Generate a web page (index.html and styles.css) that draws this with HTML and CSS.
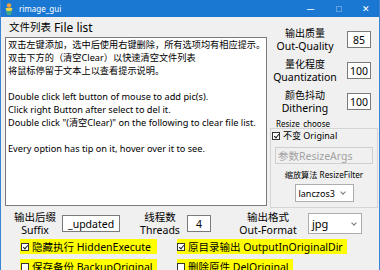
FILE: index.html
```html
<!DOCTYPE html>
<html lang="zh">

<head>
    <meta charset="UTF-8">
    <title>rimage_gui</title>
    <link rel="stylesheet" href="styles.css">
</head>

<body>
    <div class="window">
        <!-- 标题栏 -->
        <div class="titlebar">
            <svg class="app_icon" width="10" height="12" viewBox="0 0 10 12">
                <circle cx="5" cy="2.5" r="2.2" fill="#f2a23a" />
                <path d="M1.5 5 L8.5 5 L7.5 8 L2.5 8 Z" fill="#e8d24a" />
                <path d="M2 8 L8 8 L7 12 L3 12 Z" fill="#3aa58c" />
            </svg>
            <span class="title">rimage_gui</span>
            <div class="controls">
                <span class="ctl min">&#8212;</span>
                <span class="ctl max"></span>
                <span class="ctl close">&#10005;</span>
            </div>
        </div><!-- .titlebar end -->

        <div class="client">
            <div class="top">
                <div class="files">
                    <div class="files_label"><span class="zh">文件列表</span> File list</div>
                    <div class="filebox">
                        <p>双击左键添加，选中后使用右键删除，所有选项均有相应提示。</p>
                        <p>双击下方的（清空Clear）以快速清空文件列表</p>
                        <p>将鼠标停留于文本上以查看提示说明。</p>
                        <p>&nbsp;</p>
                        <p>Double click left button of mouse to add pic(s).</p>
                        <p>Click right Button after select to del it.</p>
                        <p>Double click "(清空Clear)" on the following to clear file list.</p>
                        <p>&nbsp;</p>
                        <p>Every option has tip on it, hover over it to see.</p>
                    </div>
                </div><!-- .files end -->

                <div class="options">
                    <div class="opt">
                        <div class="opt_label"><div class="zh">输出质量</div>Out-Quality</div>
                        <div class="field num">85</div>
                    </div>
                    <div class="opt">
                        <div class="opt_label"><div class="zh">量化程度</div>Quantization</div>
                        <div class="field num">100</div>
                    </div>
                    <div class="opt">
                        <div class="opt_label"><div class="zh">颜色抖动</div>Dithering</div>
                        <div class="field num">100</div>
                    </div>

                    <div class="resize_title">Resize_choose</div>
                    <div class="resize">
                        <div class="check small"><span class="box on"></span>不变 Original</div>
                        <div class="field args">参数ResizeArgs</div>
                        <div class="filter_label">缩放算法 ResizeFilter</div>
                        <div class="field select lanczos">lanczos3<span class="arrow"></span></div>
                    </div><!-- .resize end -->
                </div><!-- .options end -->
            </div><!-- .top end -->

            <div class="params">
                <div class="p_label suffix_label">输出后缀<br>Suffix</div>
                <div class="field suffix">_updated</div>
                <div class="p_label threads_label">线程数<br>Threads</div>
                <div class="field num threads">4</div>
                <div class="p_label format_label">输出格式<br>Out-Format</div>
                <div class="field select jpg">jpg<span class="arrow"></span></div>
            </div><!-- .params end -->

            <div class="checks">
                <div class="check_row">
                    <div class="check hl left"><span class="box on"></span>隐藏执行 HiddenExecute</div>
                    <div class="check hl right"><span class="box on"></span>原目录输出 OutputInOriginalDir</div>
                </div>
                <div class="check_row">
                    <div class="check hl left"><span class="box"></span>保存备份 BackupOriginal</div>
                    <div class="check hl right"><span class="box"></span>删除原件 DelOriginal</div>
                </div>
            </div><!-- .checks end -->
        </div><!-- .client end -->
    </div><!-- .window end -->
</body>

</html>
```

FILE: styles.css
```css
* {
    margin: 0;
    padding: 0;
    box-sizing: border-box;
}

body {
    width: 380px;
    height: 270px;
    overflow: hidden;
    font-family: "Noto Sans", "Noto Sans CJK SC", sans-serif;
    color: #000;
}

.window {
    width: 380px;
    height: 270px;
    background-color: #f0f0f0;
    border-left: 1px solid #3a86d6;
    border-right: 1px solid #3a86d6;
    overflow: hidden;
}

/* 标题栏 */
.titlebar {
    height: 17px;
    background-color: #1a78d2;
    display: flex;
    align-items: center;
    color: #fff;
}

.titlebar .app_icon {
    margin-left: 3px;
}

.titlebar .title {
    margin-left: 5px;
    font-size: 8px;
}

.titlebar .controls {
    margin-left: auto;
    display: flex;
    align-items: center;
    height: 100%;
}

.titlebar .ctl {
    width: 29px;
    text-align: center;
    font-size: 8px;
    line-height: 17px;
}

.titlebar .max {
    display: block;
    width: 6px;
    height: 6px;
    border: 1px solid #5d9fe0;
    margin: 0 11px;
}

.titlebar .close {
    font-size: 9px;
    width: 26px;
}

/* 上半部分 */
.top {
    display: flex;
    height: 190px;
}

.files {
    width: 266px;
    padding-left: 4px;
}

.files_label {
    height: 20px;
    line-height: 20px;
    padding-left: 4px;
    font-size: 12px;
}

.files_label .zh {
    font-size: 10.5px;
    vertical-align: 1px;
}

.filebox {
    height: 169px;
    background-color: #fff;
    border: 1px solid #7a7a7a;
    padding: 0 2px;
    font-size: 9.2px;
    line-height: 13px;
    white-space: nowrap;
    overflow: hidden;
}

.options {
    width: 108px;
    margin-left: 3px;
    padding-top: 7px;
    display: flex;
    flex-direction: column;
}

.opt {
    height: 31px;
    display: flex;
    align-items: center;
}

.opt_label {
    width: 70px;
    text-align: center;
    font-size: 10.5px;
    line-height: 13px;
}

.opt_label .zh {
    font-size: 10px;
}

.field {
    background-color: #fff;
    border: 1px solid #7a7a7a;
    font-size: 10.5px;
    display: flex;
    align-items: center;
}

.field.num {
    width: 24px;
    height: 17px;
    margin-left: 7px;
    justify-content: center;
}

.resize_title {
    margin-top: 2px;
    padding-left: 6px;
    font-size: 8px;
    line-height: 9px;
}

.resize {
    flex: 1;
    margin-bottom: -1px;
    border: 1px solid #d5d5d5;
    display: flex;
    flex-direction: column;
    align-items: center;
}

.resize .check {
    align-self: flex-start;
    height: 13px;
    padding-left: 1px;
}

.field.args {
    width: 98px;
    height: 17px;
    margin-top: 5px;
    padding-left: 2px;
    background-color: #f0f0f0;
    border-color: #cfcfcf;
    color: #a3a3a3;
}

.filter_label {
    margin-top: 4px;
    font-size: 8.2px;
    line-height: 14px;
}

.field.select {
    position: relative;
    border-color: #adadad;
    padding-left: 3px;
}

.field.select .arrow {
    position: absolute;
    top: 50%;
    width: 4px;
    height: 4px;
    border-right: 1px solid #777;
    border-bottom: 1px solid #777;
    transform: translateY(-75%) rotate(45deg);
}

.lanczos {
    width: 59px;
    height: 18px;
    margin-top: 2px;
    font-size: 9px;
}

.lanczos .arrow {
    right: 8px;
}

/* 参数行 */
.params {
    display: flex;
    align-items: center;
    height: 27px;
    margin-top: 3px;
    padding-left: 12px;
}

.p_label {
    text-align: center;
    font-size: 10.5px;
    line-height: 13px;
}

.suffix_label {
    width: 44px;
}

.field.suffix {
    width: 58px;
    height: 17px;
    margin-left: 5px;
    padding-left: 5px;
}

.threads_label {
    width: 40px;
    margin-left: 20px;
}

.field.threads {
    margin-left: 7px;
}

.format_label {
    width: 60px;
    margin-left: 27px;
}

.jpg {
    width: 54px;
    height: 21px;
    margin-left: 10px;
    font-size: 11px;
}

.jpg .arrow {
    right: 5px;
}

/* 复选框 */
.checks {
    margin-top: 2px;
    padding-left: 19px;
}

.check_row {
    display: flex;
    height: 15px;
    margin-bottom: 5px;
}

.check {
    display: flex;
    align-items: center;
    font-size: 10.5px;
    white-space: nowrap;
}

.check.small {
    font-size: 9px;
}

.check.hl {
    background-color: #ffff00;
}

.check.left {
    width: 137px;
    padding-left: 1px;
}

.check.right {
    margin-left: 20px;
    padding-right: 4px;
}

.box {
    width: 8px;
    height: 8px;
    margin-right: 3px;
    border: 1px solid #333;
    background-color: #fff;
    position: relative;
}

.box.on::after {
    content: "";
    position: absolute;
    left: 2px;
    top: 0;
    width: 2px;
    height: 4px;
    border-right: 1px solid #222;
    border-bottom: 1px solid #222;
    transform: rotate(40deg);
}
```
